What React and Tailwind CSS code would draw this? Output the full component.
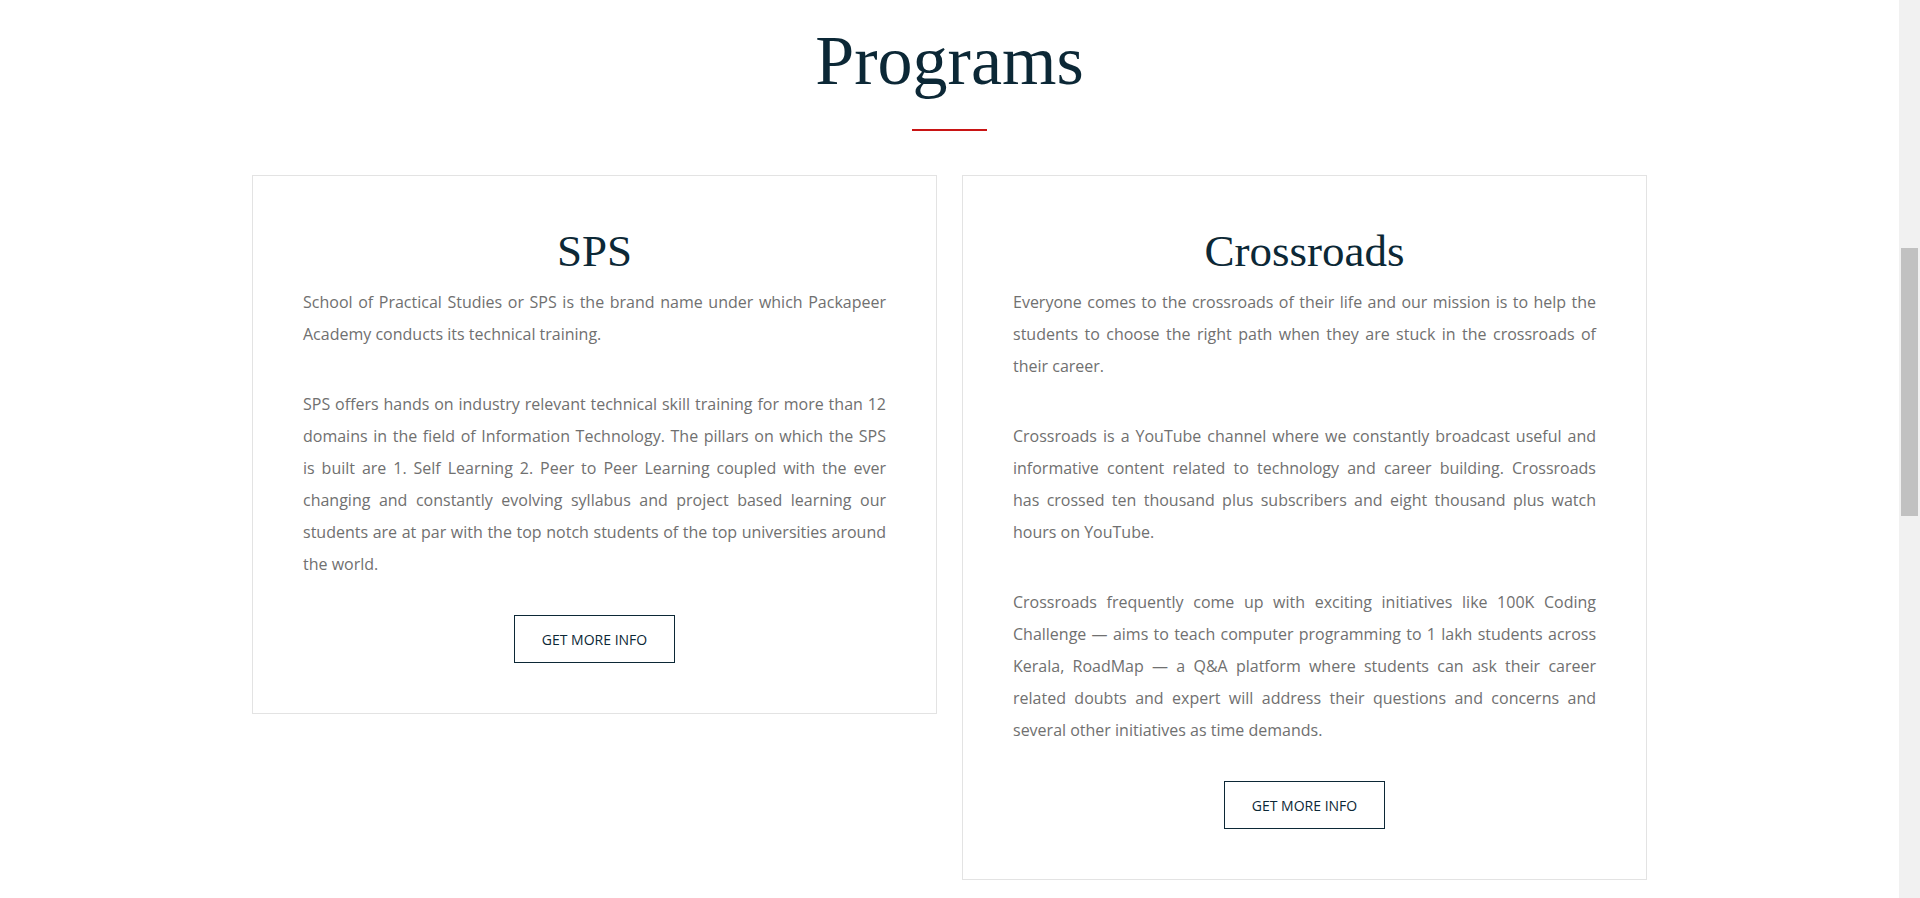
const programs = [
  {
    title: "SPS",
    paragraphs: [
      [
        "School of Practical Studies or SPS is the brand name under which Packapeer",
        "Academy conducts its technical training.",
      ],
      [
        "SPS offers hands on industry relevant technical skill training for more than 12",
        "domains in the field of Information Technology. The pillars on which the SPS",
        "is built are 1. Self Learning 2. Peer to Peer Learning coupled with the ever",
        "changing and constantly evolving syllabus and project based learning our",
        "students are at par with the top notch students of the top universities around",
        "the world.",
      ],
    ],
  },
  {
    title: "Crossroads",
    paragraphs: [
      [
        "Everyone comes to the crossroads of their life and our mission is to help the",
        "students to choose the right path when they are stuck in the crossroads of",
        "their career.",
      ],
      [
        "Crossroads is a YouTube channel where we constantly broadcast useful and",
        "informative content related to technology and career building. Crossroads",
        "has crossed ten thousand plus subscribers and eight thousand plus watch",
        "hours on YouTube.",
      ],
      [
        "Crossroads frequently come up with exciting initiatives like 100K Coding",
        "Challenge — aims to teach computer programming to 1 lakh students across",
        "Kerala, RoadMap — a Q&A platform where students can ask their career",
        "related doubts and expert will address their questions and concerns and",
        "several other initiatives as time demands.",
      ],
    ],
  },
];

function ProgramCard({ title, paragraphs }) {
  return (
    <div className="w-[685px] border border-[#e3e3e3] px-[50px] pt-[48px] pb-[50px] flex flex-col items-center">
      <h3 className="font-['Liberation_Serif',serif] text-[45px] leading-[54px] text-[#0c2836] mb-[8px]">
        {title}
      </h3>
      <div className="w-full space-y-[38px] font-['Open_Sans',sans-serif] text-[16px] leading-[32px] text-[#707070]">
        {paragraphs.map((lines, i) => (
          <p key={i}>
            {lines.map((line, j) =>
              j < lines.length - 1 ? (
                <span key={j} className="block text-justify [text-align-last:justify]">
                  {line}
                </span>
              ) : (
                <span key={j} className="block">
                  {line}
                </span>
              )
            )}
          </p>
        ))}
      </div>
      <button className="mt-[35px] w-[161px] h-[48px] border border-[#0c2836] flex items-center justify-center font-['Open_Sans',sans-serif] text-[14px] text-[#0c2836] uppercase">
        Get More Info
      </button>
    </div>
  );
}

export default function App() {
  return (
    <div className="flex h-[898px] w-full overflow-hidden bg-white">
      <main className="flex-1 flex flex-col items-center">
        <h1 className="pt-[19px] font-['Liberation_Serif',serif] text-[70px] leading-[84px] text-[#0c2836]">
          Programs
        </h1>
        <div className="mt-[26px] w-[75px] h-[2px] bg-[#c91414]" />
        <div className="mt-[44px] flex items-start gap-[25px]">
          {programs.map((p) => (
            <ProgramCard key={p.title} {...p} />
          ))}
        </div>
      </main>
      {/* scrollbar */}
      <div className="w-[21px] shrink-0 bg-[#f1f1f1] px-[2px]">
        <div className="mt-[248px] h-[268px] bg-[#c1c1c1]" />
      </div>
    </div>
  );
}
